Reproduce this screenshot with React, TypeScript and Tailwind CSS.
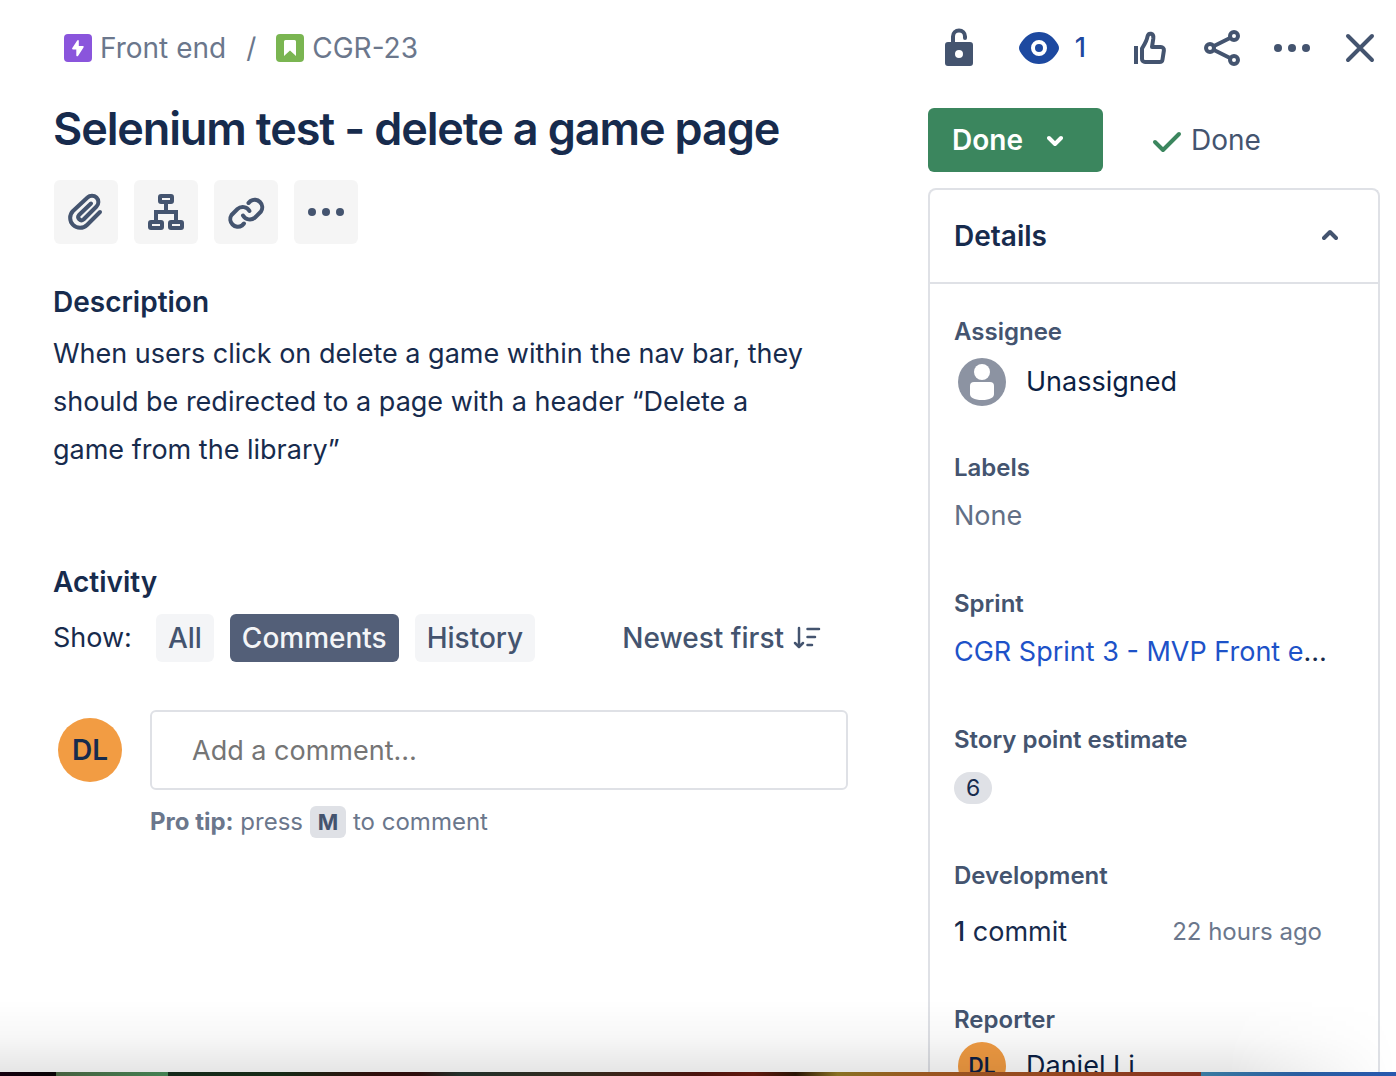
import React from "react";

type IconProps = { children: React.ReactNode; w?: number; h?: number };

function Icon({ children, w = 40, h = 40 }: IconProps) {
  return (
    <svg
      width={w}
      height={h}
      viewBox={`0 0 ${w} ${h}`}
      fill="none"
      stroke="currentColor"
      strokeWidth={4}
      strokeLinecap="round"
      strokeLinejoin="round"
      aria-hidden="true"
      className="block shrink-0"
    >
      {children}
    </svg>
  );
}

const Dots = () => (
  <g fill="currentColor" stroke="none">
    <circle cx="6" cy="20" r="4" />
    <circle cx="20" cy="20" r="4" />
    <circle cx="34" cy="20" r="4" />
  </g>
);

function ToolButton({ label, children }: { label: string; children: React.ReactNode }) {
  return (
    <button type="button" aria-label={label} className="flex size-16 items-center justify-center rounded-md bg-[#f5f5f5] text-[#44546f]">
      {children}
    </button>
  );
}

function Field({ label, children }: { label: string; children: React.ReactNode }) {
  return (
    <div>
      <dt className="text-[24px] leading-8 font-semibold text-[#44546f]">{label}</dt>
      <dd>{children}</dd>
    </div>
  );
}

function Header() {
  return (
    <header className="flex h-24 items-center justify-between pr-4 pl-16 text-[#44546f]">
      <nav aria-label="Breadcrumb" className="flex items-center text-[28px] leading-8 text-[#6b778c]">
        <a href="#front-end" className="flex items-center gap-2">
          <svg width="28" height="28" viewBox="0 0 28 28" aria-hidden="true">
            <rect width="28" height="28" rx="4" fill="#8a55dc" />
            <path d="M13.200 6.600 8.300 14c-.5.800-.1 1.400.7 1.400h3.300v5.800c0 1.200 1.200 1.500 1.900.6l5.300-8.300c.5-.8.100-1.400-.7-1.400h-4V7c0-1-.9-1.300-1.600-.4z" fill="#fff" />
          </svg>
          Front end
        </a>
        <span className="px-5">/</span>
        <a href="#cgr-23" className="flex items-center gap-2">
          <svg width="28" height="28" viewBox="0 0 28 28" aria-hidden="true">
            <rect width="28" height="28" rx="4" fill="#7ab551" />
            <path d="M8 7.500Q8 6 9.500 6h9Q20 6 20 7.500V22l-6-5.500L8 22z" fill="#fff" />
          </svg>
          CGR-23
        </a>
      </nav>
      <div className="flex items-center">
        <button type="button" aria-label="Unlock">
          <Icon w={32}>
            <path d="M10 15V8.500a6 6 0 0 1 12 0V10" />
            <path
              fill="currentColor"
              stroke="none"
              fillRule="evenodd"
              d="M5 14h22a3 3 0 0 1 3 3v18a3 3 0 0 1-3 3H5a3 3 0 0 1-3-3V17a3 3 0 0 1 3-3zm11 8a4 4 0 1 0 0 8 4 4 0 0 0 0-8z"
            />
          </Icon>
        </button>
        <button type="button" aria-label="Watchers: 1" className="ml-11 flex items-center gap-4 text-[27px] leading-8 font-medium text-[#1d49a0]">
          <Icon>
            <path
              fill="currentColor"
              stroke="none"
              d="M20 4c8 0 14.500 4.500 19 12.500q2 3.500 0 7C34.500 31.500 28 36 20 36S5.500 31.500 1 23.500q-2-3.500 0-7C5.500 8.500 12 4 20 4z"
            />
            <circle cx="20" cy="20" r="6" stroke="#fff" />
          </Icon>
          1
        </button>
        <button type="button" aria-label="Like" className="ml-11">
          <Icon>
            <path d="M6 20V34" strokeLinecap="square" />
            <path d="M12 20.500V31a3 3 0 0 0 3 3h14.500a3 3 0 0 0 3-2.600l1.400-9a3 3 0 0 0-3-3.400H22l1.300-8.500C24 4.500 18.500 4.500 17.500 8.500 16.800 13 15 15.500 12 20.500z" />
          </Icon>
        </button>
        <button type="button" aria-label="Share" className="ml-8">
          <Icon>
            <circle cx="8" cy="20" r="4" />
            <circle cx="32" cy="8" r="4" />
            <circle cx="32" cy="32" r="4" />
            <path d="m12 18 16-8M12 22l16 8" />
          </Icon>
        </button>
        <button type="button" aria-label="Actions" className="ml-[30px]">
          <Icon>
            <Dots />
          </Icon>
        </button>
        <button type="button" aria-label="Close" className="ml-7">
          <Icon>
            <path d="m8 8 24 24M32 8 8 32" />
          </Icon>
        </button>
      </div>
    </header>
  );
}

function Activity() {
  return (
    <section className="mt-[92px]">
      <h2 className="text-[28px] leading-8 font-semibold">Activity</h2>
      <div className="mt-4 flex items-center text-[27px] leading-8">
        <span>Show:</span>
        <div className="ml-6 flex gap-4 text-[28px] font-medium text-[#44546f]">
          <button type="button" className="h-12 rounded-md bg-[#f4f5f7] px-3">All</button>
          <button type="button" aria-pressed="true" className="h-12 rounded-md bg-[#535f78] px-3 text-[#f4f5f7]">
            Comments
          </button>
          <button type="button" className="h-12 rounded-md bg-[#f4f5f7] px-3">History</button>
        </div>
        <button type="button" className="mr-6 ml-auto flex items-center gap-2 text-[28px] font-medium text-[#44546f]">
          Newest first
          <Icon w={32} h={32}>
            <g strokeWidth="2.500">
              <path d="M7 6v18M3 21l4 4 4-4M15.500 7H27M15.500 15H23M15.500 23H20" />
            </g>
          </Icon>
        </button>
      </div>
      <div className="mt-12 flex items-start gap-7 pl-[5px]">
        <span className="mt-2 flex size-16 shrink-0 items-center justify-center rounded-full bg-[#f29c43] text-[28px] font-semibold">DL</span>
        <div className="min-w-0 grow">
          <input
            type="text"
            aria-label="Add a comment"
            placeholder="Add a comment…"
            className="block h-20 w-full rounded-md border-2 border-[#dfe1e6] px-10 text-[27px] placeholder:text-[#757575]"
          />
          <p className="mt-4 text-[24px] leading-8 text-[#6b778c]">
            <strong className="font-bold">Pro tip:</strong> press{" "}
            <kbd className="inline-block rounded-md bg-[#dfe1e6] px-2 font-[Inter,sans-serif] text-[22px] leading-8 font-bold text-[#44546f]">M</kbd> to comment
          </p>
        </div>
      </div>
    </section>
  );
}

function Details() {
  return (
    <aside>
      <div className="flex items-center text-[28px] leading-8">
        <button type="button" className="flex h-16 items-center gap-6 rounded-md bg-[#3b865e] pr-10 pl-6 font-semibold text-white">
          Done
          <Icon w={16} h={16}>
            <path d="m2 6 6 6 6-6" />
          </Icon>
        </button>
        <span className="ml-12 flex items-center gap-2 text-[#44546f]">
          <span className="text-[#3b865e]">
            <Icon w={32} h={32}>
              <path d="m4 18 8 8L28 10" />
            </Icon>
          </span>
          Done
        </span>
      </div>
      <section className="mt-4 rounded-t-lg border-2 border-b-0 border-[#dfe1e6]">
        <h2>
          <button
            type="button"
            aria-expanded="true"
            className="flex h-[94px] w-full items-center justify-between border-b-2 border-[#dfe1e6] pr-10 pl-6 text-[28px] font-semibold"
          >
            Details
            <span className="text-[#44546f]">
              <Icon w={16} h={16}>
                <path d="m2 10 6-6 6 6" />
              </Icon>
            </span>
          </button>
        </h2>
        <dl className="px-6 pt-8 text-[27px] leading-8">
          <Field label="Assignee">
            <div className="mt-2 mb-11 flex h-13 items-center gap-5 pl-1 text-[#0c1f44]">
              <svg width="48" height="48" viewBox="0 0 48 48" aria-hidden="true">
                <circle cx="24" cy="24" r="24" fill="#8c93a2" />
                <circle cx="24" cy="14" r="8" fill="#fff" />
                <path d="M16 24h16q4 0 4 4v8c0 3.500-4 6-12 6s-12-2.500-12-6v-8q0-4 4-4z" fill="#fff" />
              </svg>
              Unassigned
            </div>
          </Field>
          <Field label="Labels">
            <div className="mt-2 mb-12 h-12 content-center text-[#626f86]">None</div>
          </Field>
          <Field label="Sprint">
            <div className="mt-2 mb-12 h-12 content-center truncate pr-5">
              <a href="#sprint" className="text-[#1d52c8]">CGR Sprint 3 - MVP Front end</a>
            </div>
          </Field>
          <Field label="Story point estimate">
            <div className="mt-2 mb-12 flex h-12 items-center">
              <span className="rounded-full bg-[#dfe1e6] px-3 text-[23px]">6</span>
            </div>
          </Field>
          <Field label="Development">
            <div className="mt-4 mb-12 flex h-12 items-center justify-between pr-8">
              <a href="#commits"><span className="font-medium">1</span> commit</a>
              <span className="text-[24px] text-[#6b778c]">22 hours ago</span>
            </div>
          </Field>
          <Field label="Reporter">
            <div className="mt-1 flex h-13 items-center gap-5 pl-1 text-[#0c1f44]">
              <span className="flex size-12 items-center justify-center rounded-full bg-[#f29c43] text-[21px] font-semibold">DL</span>
              Daniel Li
            </div>
          </Field>
        </dl>
      </section>
    </aside>
  );
}

export default function App() {
  return (
    <div className="flex h-screen flex-col overflow-hidden bg-white font-[Inter,sans-serif] text-[#172b4d]">
      <div className="relative min-h-0 grow overflow-hidden">
        <Header />
        <main className="grid grid-cols-[minmax(0,1fr)_452px] gap-20 pt-3 pr-4 pl-[53px]">
          <div>
            <h1 className="text-[45px] leading-[42px] font-semibold tracking-tight">Selenium test - delete a game page</h1>
            <div className="mt-[30px] flex gap-4 pl-px">
              <ToolButton label="Attach">
                <Icon w={64} h={64}>
                  <path d="M46 32 33 45A9.900 9.900 0 0 1 19 31L33.500 17.500A6.300 6.300 0 0 1 42.500 26.500L29.500 39.500A3.200 3.200 0 0 1 25 35L37 23.500" />
                </Icon>
              </ToolButton>
              <ToolButton label="Add a child issue">
                <Icon w={64} h={64}>
                  <rect x="26" y="16" width="12" height="6" rx="1" />
                  <rect x="16" y="42" width="12" height="6" rx="1" />
                  <rect x="36" y="42" width="12" height="6" rx="1" />
                  <path d="M32 22v10M22 41v-9h20v9" strokeLinecap="butt" strokeLinejoin="miter" />
                </Icon>
              </ToolButton>
              <ToolButton label="Link issue">
                <Icon w={64} h={64}>
                  <path d="M34.500 23 36.500 21A7.600 7.600 0 0 1 47 31.500L41 37.500A7.800 7.800 0 0 1 29 35.500" />
                  <path d="M30 43.500 28 45.500A7.600 7.600 0 0 1 17.500 35L23.500 29A7.800 7.800 0 0 1 35.500 31" />
                </Icon>
              </ToolButton>
              <ToolButton label="More">
                <Icon>
                  <Dots />
                </Icon>
              </ToolButton>
            </div>
            <section className="mt-[42px]">
              <h2 className="text-[28px] leading-8 font-semibold">Description</h2>
              <p className="mt-3 pr-8 text-[27px] leading-12">
                When users click on delete a game within the nav bar, they should be redirected to a page with a header “Delete a game from the library”
              </p>
            </section>
            <Activity />
          </div>
          <Details />
        </main>
        <div className="pointer-events-none absolute inset-x-0 bottom-0 h-18 bg-linear-to-b from-transparent via-black/3 to-black/10 [mask-image:linear-gradient(to_right,black_88%,transparent)]" />
      </div>
      <div className="h-1 shrink-0 bg-[linear-gradient(90deg,#14000f_0%,#080405_4%,#46603f_4%,#438052_12%,#15291a_12%,#162a16_20%,#300d0b_27%,#2e0d0c_30%,#22302a_33%,#34291d_42%,#4b130d_50%,#61180d_54%,#291405_57%,#887022_60%,#9a5620_66%,#94461f_76%,#83301f_86%,#397aa0_86%,#2a5da0_93%,#2758ae_100%)]" />
    </div>
  );
}
